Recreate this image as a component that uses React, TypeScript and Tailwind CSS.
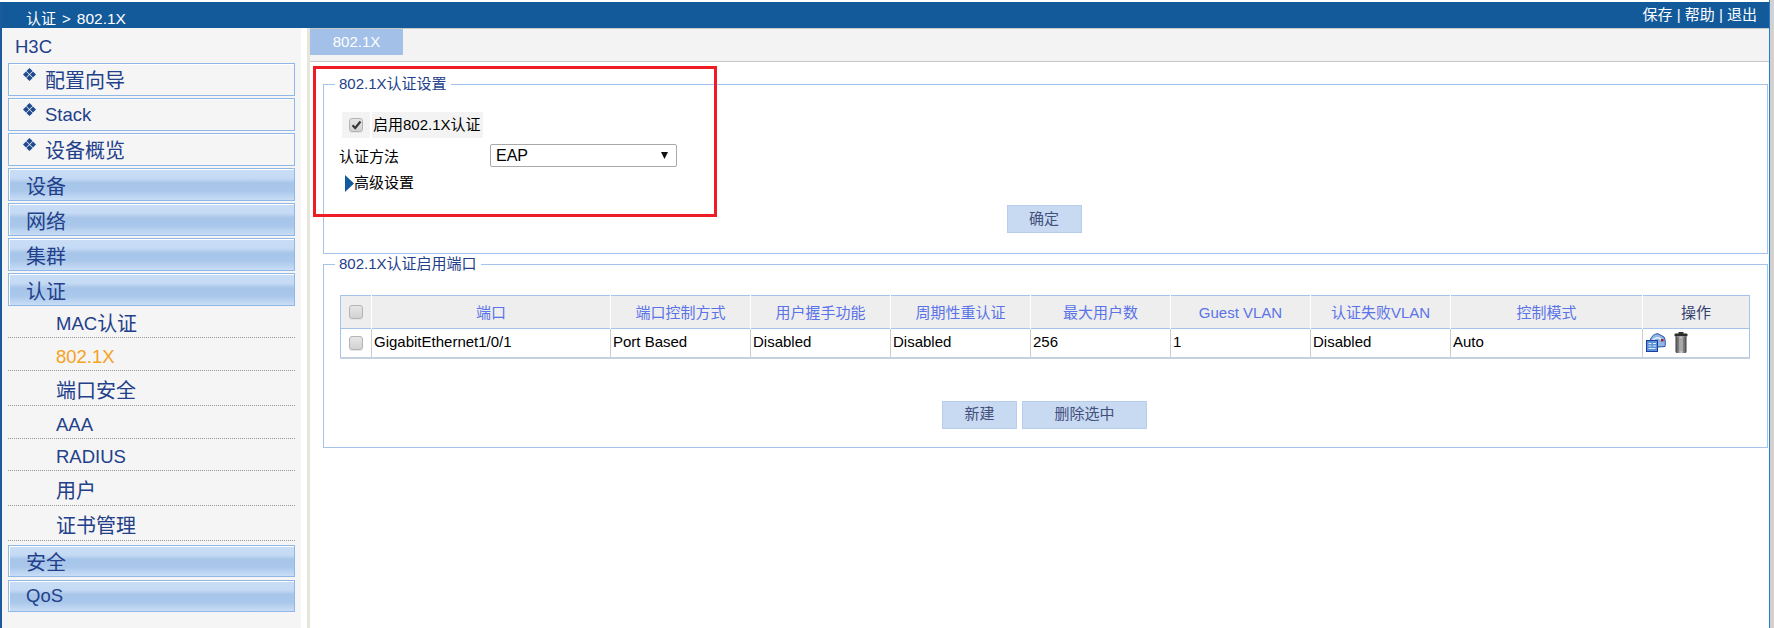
import React from 'react';

const tree = 'flex items-center border border-[#8fb8e8] shadow-[inset_1px_1px_0_#ffffff]';
const groupBg = 'bg-[linear-gradient(#c9ddf6_0%,#c5daf4_30%,#a7c5e8_45%,#a9c7ea_70%,#c9ddf6_100%)]';

const Diamond: React.FC = () => (
  <svg width="13" height="13" viewBox="0 0 13 13" className="absolute left-[14px] top-[4px]" fill="#1f4a90">
    <path d="M6.5 0 9.6 3 6.5 6 3.4 3Z" />
    <path d="M6.5 7 9.6 10 6.5 13 3.4 10Z" />
    <path d="M3 3.4 6 6.5 3 9.6 0 6.5Z" />
    <path d="M10 3.4 13 6.5 10 9.6 7 6.5Z" />
  </svg>
);

const WizardItem: React.FC<{ children: React.ReactNode; pad?: string }> = ({ children, pad = 'pt-[2px]' }) => (
  <div className={`relative h-[33px] pl-[36px] ${pad} ${tree} bg-[#f5f5f5]`}>
    <Diamond />
    {children}
  </div>
);

const GroupItem: React.FC<{ children: React.ReactNode; height?: string; pad?: string }> = ({
  children,
  height = 'h-[33px]',
  pad = 'pt-[4px]',
}) => <div className={`${height} ${pad} pl-[17px] ${tree} ${groupBg}`}>{children}</div>;

const SubItem: React.FC<{ children: React.ReactNode; height: string; active?: boolean }> = ({ children, height, active }) => (
  <div className={`${height} flex items-center pl-[48px] pt-[5px] border-b border-dotted border-[#999999] ${active ? 'text-[#f5a11d]' : ''}`}>
    {children}
  </div>
);

const Zh: React.FC<{ children: React.ReactNode }> = ({ children }) => <span className="text-[20px]">{children}</span>;

const CheckBox: React.FC<{ checked?: boolean }> = ({ checked }) => (
  <span className="flex h-[14px] w-[14px] items-center justify-center rounded-[3px] border border-[#b4b4b4] bg-gradient-to-b from-[#e6e6e6] to-[#d2d2d2] shadow-[0_1px_0_#e4e4e4]">
    {checked && (
      <svg width="11" height="10" viewBox="0 0 11 10">
        <path d="M1.5 5.2 4.2 8 9.5 1.5" fill="none" stroke="#3a3a3a" strokeWidth="2.2" />
      </svg>
    )}
  </span>
);

const ActionButton: React.FC<{ width: string; children: React.ReactNode }> = ({ width, children }) => (
  <button className={`${width} h-[28px] bg-[#c8d9f2] border border-[#b6cdec] text-[15px] text-[#44507c]`}>{children}</button>
);

const ConfigIcon: React.FC = () => (
  <svg width="20" height="19" viewBox="0 0 20 19">
    <path d="M4 8 C5 3 9 0.5 12 0.8 L18 4 C19.5 6 19.5 11 19 13.5 L12 14 L4 14Z" fill="#8db8e6" stroke="#2a4fa8" strokeWidth="1" />
    <path d="M7 7 C9 4 13 4 16 7" fill="none" stroke="#e6f1fb" strokeWidth="1.4" />
    <rect x="15" y="6" width="2.5" height="2.5" fill="#a01c3c" />
    <rect x="0.5" y="7.5" width="11" height="11" fill="#5c92d6" stroke="#1f3aa0" strokeWidth="1" />
    <path d="M2.5 10.5h3M7 10.5h3M2.5 13h3M7 13h3M2.5 15.5h7" stroke="#dcebfa" strokeWidth="1.2" />
  </svg>
);

const TrashIcon: React.FC = () => (
  <svg width="14" height="21" viewBox="0 0 14 21">
    <defs>
      <linearGradient id="can" x1="0" x2="1" y1="0" y2="0">
        <stop offset="0" stopColor="#3a3a3a" />
        <stop offset="0.5" stopColor="#d0d0d0" />
        <stop offset="1" stopColor="#3a3a3a" />
      </linearGradient>
    </defs>
    <rect x="4.5" y="0" width="5" height="2" fill="#333333" />
    <rect x="0.5" y="1.5" width="13" height="3" rx="1" fill="#2c2c2c" />
    <path d="M1.5 4.5h11v15c0 1-1 1.5-2 1.5h-7c-1 0-2-.5-2-1.5Z" fill="url(#can)" />
    <path d="M4.5 6v13M7 6v13M9.5 6v13" stroke="#707070" strokeWidth="0.6" />
  </svg>
);

const headers = [
  { label: '端口', width: 'w-[239px]' },
  { label: '端口控制方式', width: 'w-[140px]' },
  { label: '用户握手功能', width: 'w-[140px]' },
  { label: '周期性重认证', width: 'w-[140px]' },
  { label: '最大用户数', width: 'w-[140px]' },
  { label: 'Guest VLAN', width: 'w-[140px]' },
  { label: '认证失败VLAN', width: 'w-[140px]' },
  { label: '控制模式', width: 'w-[192px]' },
];

const row = ['GigabitEthernet1/0/1', 'Port Based', 'Disabled', 'Disabled', '256', '1', 'Disabled', 'Auto'];

export default function App() {
  return (
    <div className="relative flex h-[628px] w-[1774px] overflow-hidden bg-white font-['Liberation_Sans','Noto_Sans_CJK_SC',sans-serif]">
      <div className="mt-[2px] w-[2px] bg-[#1b5a9c]" />

      <div className="flex min-w-0 flex-1 flex-col pt-[2px]">
        <header className="flex h-[26px] items-start justify-between bg-[#135a9b] pl-[24px] pr-[12px] text-[15px] text-white">
          <span className="mt-[7px] leading-[20px]">
            认证<span className="mx-[6px]">&gt;</span>
            <span className="text-[15.5px]">802.1X</span>
          </span>
          <span className="mt-[3px] leading-[20px]">保存 | 帮助 | 退出</span>
        </header>

        <div className="flex min-h-0 flex-1">
          <aside className="w-[299px] bg-[#f5f5f5] px-[6px] text-[18.5px] text-[#23408a]">
            <div className="flex h-[35px] items-center pl-[7px] pt-[3px]">H3C</div>
            <div className="flex flex-col gap-[2px]">
              <WizardItem><Zh>配置向导</Zh></WizardItem>
              <WizardItem pad="pt-0">Stack</WizardItem>
              <WizardItem><Zh>设备概览</Zh></WizardItem>
              <GroupItem><Zh>设备</Zh></GroupItem>
              <GroupItem><Zh>网络</Zh></GroupItem>
              <GroupItem><Zh>集群</Zh></GroupItem>
              <GroupItem><Zh>认证</Zh></GroupItem>
            </div>
            <SubItem height="h-[32px]">MAC<Zh>认证</Zh></SubItem>
            <SubItem height="h-[33px]" active>802.1X</SubItem>
            <SubItem height="h-[35px]"><Zh>端口安全</Zh></SubItem>
            <SubItem height="h-[33px]">AAA</SubItem>
            <SubItem height="h-[32px]">RADIUS</SubItem>
            <SubItem height="h-[35px]"><Zh>用户</Zh></SubItem>
            <SubItem height="h-[35px]"><Zh>证书管理</Zh></SubItem>
            <div className="mt-[4px] flex flex-col gap-[3px]">
              <GroupItem height="h-[32px]"><Zh>安全</Zh></GroupItem>
              <GroupItem height="h-[32px]" pad="pt-0">QoS</GroupItem>
            </div>
          </aside>

          <div className="w-[6px] bg-white" />
          <div className="w-[3px] bg-[#e8e6d9]" />

          <main className="min-w-0 flex-1 text-[15px] text-black">
            <div className="h-[34px] border-y border-t-[#c8c8c8] border-b-[#c8c8c8] bg-[#f3f3f3]">
              <div className="flex h-[26px] w-[93px] items-center justify-center bg-[#a3c0e8] text-white">802.1X</div>
            </div>

            <fieldset className="ml-[13px] mr-[1px] mt-[12px] border border-[#a3c2ec]">
              <legend className="ml-[11px] h-[20px] px-[4px] leading-[20px] text-[#23408a]">802.1X认证设置</legend>
              <div className="flex pl-[18px] pt-[18px]">
                <div className="flex h-[26px] w-[28px] items-center justify-center bg-[#f3f3f3]">
                  <CheckBox checked />
                </div>
                <div className="ml-[2px] flex h-[26px] w-[111px] items-center bg-[#f3f3f3] pl-[1px]">启用802.1X认证</div>
              </div>
              <div className="mt-[6px] flex h-[23px] items-center pl-[15px]">
                <span className="mt-[3px] w-[151px]">认证方法</span>
                <div className="flex h-[23px] w-[187px] items-center justify-between rounded-[2px] border border-[#a9a9a9] pl-[5px] pr-[8px] text-[16px]">
                  EAP
                  <svg width="7" height="7" viewBox="0 0 7 7"><path d="M0 0h7L3.5 7Z" fill="#111111" /></svg>
                </div>
              </div>
              <div className="mt-[8px] flex h-[17px] items-center pl-[21px]">
                <svg width="9" height="17" viewBox="0 0 9 17"><path d="M0 0 9 8.5 0 17Z" fill="#135a9b" /></svg>
                <span>高级设置</span>
              </div>
              <div className="mt-[13px] flex justify-center pb-[20px] pr-[3px]">
                <ActionButton width="w-[75px]">确定</ActionButton>
              </div>
            </fieldset>

            <fieldset className="ml-[13px] mr-[1px] border border-[#a3c2ec]">
              <legend className="ml-[11px] h-[20px] px-[4px] leading-[20px] text-[#23408a]">802.1X认证启用端口</legend>
              <div className="pl-[16px] pt-[21px]">
                <table className="w-[1410px] table-fixed border-collapse border border-[#a3c2ec]">
                  <thead>
                    <tr className="h-[33px] border-b border-[#a3c2ec] bg-[#eeeeee] font-normal text-[#5b73e8]">
                      <th className="w-[31px] border-r border-white p-0">
                        <span className="flex justify-center"><CheckBox /></span>
                      </th>
                      {headers.map((h) => (
                        <th key={h.label} className={`${h.width} border-r border-white pt-[3px] font-normal`}>{h.label}</th>
                      ))}
                      <th className="border-white pt-[3px] font-normal text-[#33406e]">操作</th>
                    </tr>
                  </thead>
                  <tbody>
                    <tr className="h-[29px] border-b-2 border-[#c4cfe0]">
                      <td className="border-r border-[#cccccc] p-0">
                        <span className="flex justify-center"><CheckBox /></span>
                      </td>
                      {row.map((cell, i) => (
                        <td key={i} className="border-r border-[#cccccc] pb-[2px] pl-[2px]">{cell}</td>
                      ))}
                      <td className="pl-[3px]">
                        <span className="flex items-center gap-[8px]">
                          <ConfigIcon />
                          <TrashIcon />
                        </span>
                      </td>
                    </tr>
                  </tbody>
                </table>
              </div>
              <div className="mt-[42px] flex gap-[5px] pb-[18px] pl-[618px]">
                <ActionButton width="w-[75px]">新建</ActionButton>
                <ActionButton width="w-[125px]">删除选中</ActionButton>
              </div>
            </fieldset>
          </main>
        </div>
      </div>

      <div className="w-[1px] bg-[#2b7bc4]" />
      <div className="w-[4px] bg-[#d2d2d2]" />

      {/* red annotation box from the screenshot */}
      <div className="absolute left-[313px] top-[66px] h-[151px] w-[404px] border-[3px] border-[#ee1c25]" />
    </div>
  );
}
